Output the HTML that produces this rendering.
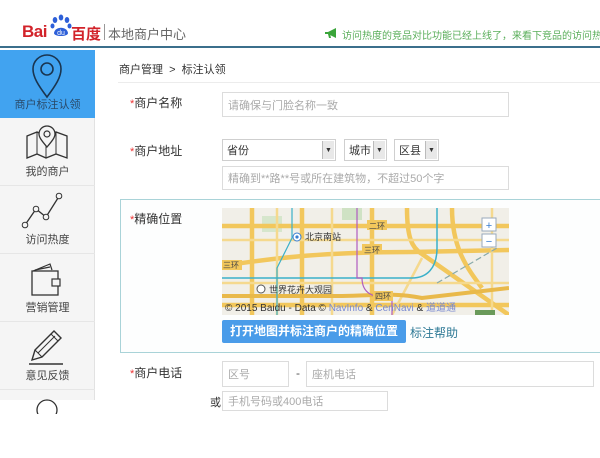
<!DOCTYPE html>
<html><head><meta charset="utf-8"><style>
*{margin:0;padding:0;box-sizing:border-box}
body{width:600px;height:400px;overflow:hidden;background:#fff;font-family:"Liberation Sans","Noto Sans CJK SC",sans-serif;position:relative;color:#333}
.a{position:absolute}
.hdr{left:0;top:0;width:600px;height:48px;background:#fff;border-bottom:2px solid #3b6f8c}
.side{left:0;top:50px;width:95px;height:350px;background:#f5f5f5;border-right:1px solid #e2e2e2}
.it{position:absolute;left:0;width:95px;height:68px;border-bottom:1px solid #e6e6e6;text-align:center;font-size:11px;color:#444}
.it span{position:absolute;left:0;width:95px;bottom:6px}
.it svg{position:absolute;left:25px;top:4px}
.lbl{font-size:12px;color:#333}
.lbl b{color:#e33;font-weight:normal;font-size:11px}
.inp{border:1px solid #dcdcdc;background:#fff;font-size:11px;color:#aaa;padding-left:5px;display:flex;align-items:center}
.sel{border:1px solid #cfcfcf;background:#fff;font-size:11px;color:#333;padding-left:4px;display:flex;align-items:center}
.arr{position:absolute;right:1px;top:1px;bottom:1px;width:12px;background:#e8e8e8;border-left:1px solid #bbb;font-size:7px;display:flex;align-items:center;justify-content:center;color:#333}
</style></head><body>
<div class="a hdr"></div>
<div class="a" style="left:22px;top:22px;font-size:17px;font-weight:bold;color:#d2232a;letter-spacing:-0.5px">Bai</div>
<svg class="a" style="left:50px;top:14px" width="22" height="24" viewBox="0 0 22 24"><g fill="#2d5fd8"><ellipse cx="5" cy="6" rx="2.3" ry="3"/><ellipse cx="11" cy="3.5" rx="2.3" ry="3"/><ellipse cx="17" cy="6" rx="2.3" ry="3"/><ellipse cx="2.5" cy="12" rx="2" ry="2.5"/><ellipse cx="19.5" cy="12" rx="2" ry="2.5"/><path d="M4 19 C5 12 17 12 18 19 C18 23 4 23 4 19Z"/></g><text x="11" y="21" font-size="7" fill="#fff" text-anchor="middle" font-family="Liberation Sans">du</text></svg>
<div class="a" style="left:71px;top:23px;font-size:15px;font-weight:bold;color:#d2232a">百度</div>
<div class="a" style="left:104px;top:24px;height:16px;border-left:1px solid #999"></div>
<div class="a" style="left:108px;top:24px;font-size:13px;color:#666">本地商户中心</div>
<svg class="a" style="left:324px;top:27px" width="14" height="12" viewBox="0 0 14 12"><path d="M1 5h3l8-4v10l-8-4H1z" fill="#3aa53a"/><path d="M4 7l1 4h2l-1-4z" fill="#3aa53a"/></svg>
<div class="a" style="left:342px;top:27px;font-size:10px;color:#5aae5a;white-space:nowrap">访问热度的竞品对比功能已经上线了，来看下竞品的访问热度</div>

<div class="a side">
 <div class="it" style="top:0;background:#41a3f0;color:#2a4a6a;border-bottom:none"><svg width="44" height="46" viewBox="0 0 44 46" style="left:25px;top:3px"><path d="M22 44C13 32 8 24 8 16a14 14 0 0 1 28 0c0 8-5 16-14 28z" fill="none" stroke="#1a3550" stroke-width="1.6"/><circle cx="22" cy="16" r="6" fill="none" stroke="#1a3550" stroke-width="1.6"/></svg><span>商户标注认领</span></div>
 <div class="it" style="top:68px"><svg width="46" height="42" viewBox="0 0 46 42" style="left:24px;top:3px"><path d="M3 15l10-4 9 4 10-4 11 4v22l-11-4-10 4-9-4-10 4z" fill="none" stroke="#333" stroke-width="1.3"/><path d="M13 11v22M22 15v22M32 11v22" stroke="#333" stroke-width="1"/><path d="M23 26c-6-7-8-10-8-13a8 8 0 0 1 16 0c0 3-2 6-8 13z" fill="#f5f5f5" stroke="#333" stroke-width="1.3"/><circle cx="23" cy="13" r="3" fill="none" stroke="#333" stroke-width="1.2"/></svg><span>我的商户</span></div>
 <div class="it" style="top:136px"><svg width="50" height="44" viewBox="0 0 50 44" style="left:20px;top:2px"><path d="M5 37L16 21L26 29L38 10" fill="none" stroke="#333" stroke-width="1.3"/><circle cx="5" cy="37" r="2.8" fill="#f5f5f5" stroke="#333"/><circle cx="16" cy="21" r="2.8" fill="#f5f5f5" stroke="#333"/><circle cx="26" cy="29" r="2.8" fill="#f5f5f5" stroke="#333"/><circle cx="39" cy="8" r="2.8" fill="#f5f5f5" stroke="#333"/></svg><span>访问热度</span></div>
 <div class="it" style="top:204px"><svg width="44" height="44" viewBox="0 0 44 44"><path d="M8 13l17-7 2 6M10 12l15-3" fill="none" stroke="#333" stroke-width="1.2"/><rect x="7" y="13" width="26" height="24" fill="none" stroke="#333" stroke-width="1.3"/><rect x="27" y="21" width="8" height="7" fill="#f5f5f5" stroke="#333" stroke-width="1.2"/></svg><span>营销管理</span></div>
 <div class="it" style="top:272px"><svg width="46" height="44" viewBox="0 0 46 44" style="left:24px;top:2px"><path d="M8 36l3-10L30 7l7 7-19 19z" fill="none" stroke="#333" stroke-width="1.4"/><path d="M11 26l7 7M27 10l7 7M14 29l17-17" stroke="#333" stroke-width="1"/><path d="M5 40h34" stroke="#333" stroke-width="1.5"/></svg><span>意见反馈</span></div>
 <div class="it" style="top:340px;border:none"><svg width="44" height="20" viewBox="0 0 44 20"><circle cx="22" cy="16" r="10" fill="none" stroke="#333" stroke-width="1.3"/></svg></div>
</div>

<div class="a" style="left:119px;top:61px;font-size:11px;color:#333">商户管理&nbsp;&nbsp;&gt;&nbsp;&nbsp;标注认领</div>
<div class="a" style="left:118px;top:82px;width:482px;border-top:1px solid #ececec"></div>

<div class="a lbl" style="left:130px;top:94px"><b>*</b>商户名称</div>
<div class="a inp" style="left:222px;top:92px;width:287px;height:25px">请确保与门脸名称一致</div>

<div class="a lbl" style="left:130px;top:142px"><b>*</b>商户地址</div>
<div class="a sel" style="left:222px;top:139px;width:114px;height:22px">省份<div class="arr">▼</div></div>
<div class="a sel" style="left:344px;top:139px;width:43px;height:22px">城市<div class="arr">▼</div></div>
<div class="a sel" style="left:394px;top:139px;width:45px;height:22px">区县<div class="arr">▼</div></div>
<div class="a inp" style="left:222px;top:166px;width:287px;height:24px">精确到**路**号或所在建筑物，不超过50个字</div>

<div class="a" style="left:120px;top:199px;width:490px;height:154px;border:1px solid #a9d3d8;background:#fdfefe"></div>
<div class="a lbl" style="left:130px;top:210px"><b>*</b>精确位置</div>
<svg class="a" style="left:222px;top:208px" width="287" height="107" viewBox="0 0 287 107">
<rect width="287" height="107" fill="#f1efe8"/>
<rect x="120" y="0" width="20" height="12" fill="#cfe2c4"/><rect x="40" y="8" width="20" height="16" fill="#d6e6cc"/>
<g stroke="#f2c75c" fill="none" stroke-width="4.5">
<path d="M0 18H287"/><path d="M0 58 C40 52 90 44 190 44 L287 42"/><path d="M0 97 H287"/><path d="M30 0V107"/><path d="M80 0V107"/><path d="M185 0 C185 30 190 40 200 46 L287 107"/><path d="M150 0V107"/><path d="M230 0 C230 40 245 60 260 80"/>
</g>
<g stroke="#f5d98e" fill="none" stroke-width="2.5"><path d="M0 32H287"/><path d="M0 75H287"/><path d="M110 0V107"/><path d="M55 0V107"/><path d="M270 0V107"/><path d="M200 50 L170 107"/></g>
<path d="M0 88 H120 C150 88 170 84 200 90 L287 80" stroke="#e9b94a" stroke-width="4" fill="none"/>
<path d="M0 70 H190 C205 70 215 60 215 40 V0" stroke="#3ab0c9" stroke-width="1.5" fill="none"/>
<path d="M70 0 V30 L55 60 V107" stroke="#3ab0c9" stroke-width="1.2" fill="none"/>
<path d="M135 0 V70 H140 C140 85 150 90 170 90 V107" stroke="#b05cc0" stroke-width="1.2" fill="none"/>
<path d="M215 75 L275 40" stroke="#8aa" stroke-width="1.2" stroke-dasharray="6 3" fill="none"/>
<circle cx="75" cy="29" r="4" fill="#fff" stroke="#3a7ed0"/><circle cx="75" cy="29" r="1.6" fill="#3a7ed0"/>
<text x="83" y="32" font-size="9" fill="#333" font-family="Noto Sans CJK SC">北京南站</text>
<rect x="145" y="12" width="20" height="10" fill="#f2c75c"/><text x="147" y="21" font-size="8" fill="#444" font-family="Noto Sans CJK SC">二环</text>
<rect x="140" y="36" width="20" height="10" fill="#f2c75c"/><text x="142" y="45" font-size="8" fill="#444" font-family="Noto Sans CJK SC">三环</text>
<rect x="0" y="52" width="20" height="10" fill="#f2c75c"/><text x="1" y="60" font-size="8" fill="#444" font-family="Noto Sans CJK SC">三环</text>
<rect x="151" y="83" width="20" height="10" fill="#f2c75c"/><text x="153" y="91" font-size="8" fill="#444" font-family="Noto Sans CJK SC">四环</text>
<circle cx="39" cy="81" r="4" fill="#fff" stroke="#555"/>
<text x="47" y="85" font-size="9" fill="#333" font-family="Noto Sans CJK SC">世界花卉大观园</text>
<rect x="253" y="102" width="20" height="6" fill="#6a9a5a"/>
<text x="3" y="103" font-size="10" fill="#333" font-family="Liberation Sans">© 2015 Baidu - Data © <tspan fill="#7a8ad0">NavInfo</tspan> &amp; <tspan fill="#7a8ad0">CenNavi</tspan> &amp; <tspan fill="#7a8ad0">道道通</tspan></text>
<rect x="260" y="10" width="14" height="13" fill="#fff" stroke="#9ab"/><text x="267" y="21" font-size="11" fill="#3a7ed0" text-anchor="middle">+</text>
<rect x="260" y="26" width="14" height="13" fill="#fff" stroke="#9ab"/><text x="267" y="37" font-size="11" fill="#3a7ed0" text-anchor="middle">−</text>
</svg>
<div class="a" style="left:222px;top:320px;width:184px;height:23px;background:#4a9ce9;border-radius:2px;color:#fff;font-size:12px;font-weight:bold;text-align:center;line-height:23px">打开地图并标注商户的精确位置</div>
<div class="a" style="left:410px;top:324px;font-size:12px;color:#2f7a96">标注帮助</div>

<div class="a lbl" style="left:130px;top:364px"><b>*</b>商户电话</div>
<div class="a inp" style="left:222px;top:361px;width:67px;height:26px">区号</div>
<div class="a" style="left:296px;top:366px;font-size:12px;color:#555">-</div>
<div class="a inp" style="left:306px;top:361px;width:288px;height:26px">座机电话</div>
<div class="a" style="left:210px;top:394px;font-size:11px;color:#333">或</div>
<div class="a inp" style="left:222px;top:391px;width:166px;height:20px">手机号码或400电话</div>
</body></html>
